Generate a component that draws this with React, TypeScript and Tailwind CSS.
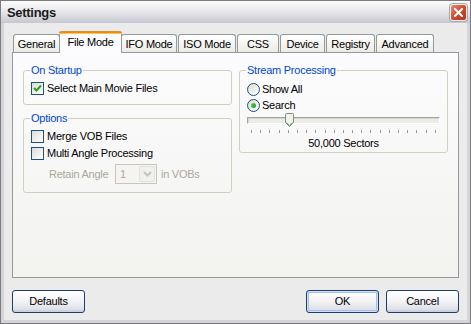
import React from "react";

function CheckBox({ checked }: { checked?: boolean }) {
  return (
    <span className="w-[13px] h-[13px] shrink-0 border border-[#1c5180] bg-gradient-to-br from-[#dcdcd7] to-[#ffffff] flex items-center justify-center">
      {checked && (
        <svg width="9" height="9" viewBox="0 0 9 9">
          <path d="M1 4 L3.5 6.5 L8 1.5" fill="none" stroke="#21a121" strokeWidth="2" />
        </svg>
      )}
    </span>
  );
}

function Radio({ checked }: { checked?: boolean }) {
  return (
    <span className="w-[13px] h-[13px] shrink-0 rounded-full border border-[#1c5180] bg-gradient-to-br from-[#dcdcd7] to-[#ffffff] flex items-center justify-center">
      {checked && <span className="w-[5px] h-[5px] rounded-full bg-gradient-to-br from-[#55d051] to-[#1a9e1a]" />}
    </span>
  );
}

function Button({ label, def }: { label: string; def?: boolean }) {
  return (
    <div
      className={
        "w-[73px] h-[23px] rounded-[3px] border border-[#1f3f6b] bg-gradient-to-b from-[#ffffff] via-[#f3f3f6] to-[#d8d9e2] flex items-center justify-center " +
        (def ? "shadow-[inset_0_0_0_1px_#cfe0fb,inset_0_0_0_2px_#a4bff0]" : "shadow-[inset_0_-2px_0_#d0d1da]")
      }
    >
      {label}
    </div>
  );
}

const tabs = [
  { label: "General", cls: "w-[47px]" },
  { label: "File Mode", cls: "w-[63px]", active: true },
  { label: "IFO Mode", cls: "w-[56px]" },
  { label: "ISO Mode", cls: "w-[58px]" },
  { label: "CSS", cls: "w-[42px]" },
  { label: "Device", cls: "w-[45px]" },
  { label: "Registry", cls: "w-[49px]" },
  { label: "Advanced", cls: "w-[58px]" },
];

export default function App() {
  const ticks = Array.from({ length: 21 }, (_, i) => i);
  return (
    <div className="w-[471px] h-[324px] flex flex-col border border-[#7c7c80] bg-[#d4d4d8] text-[11px] leading-[13px] tracking-[-0.25px] text-black font-[family-name:'Liberation_Sans',Tahoma,sans-serif] overflow-hidden select-none">
      {/* Title bar */}
      <div className="h-[22px] shrink-0 flex items-center justify-between pl-[6px] pr-[3px] bg-gradient-to-b from-[#fdfdfd] via-[#e6e6ea] to-[#c6c7d0]">
        <span className="font-bold text-[13px] tracking-[-0.3px] text-[#1a1a1a] pt-[1px]">Settings</span>
        <div className="w-[17px] h-[17px] rounded-[3px] border border-[#f0f0f0] bg-gradient-to-br from-[#e88a74] via-[#d2492f] to-[#b5311c] flex items-center justify-center shadow-[0_0_0_1px_#a8a8b0]">
          <svg width="9" height="9" viewBox="0 0 9 9">
            <path d="M1 1 L8 8 M8 1 L1 8" stroke="#ffffff" strokeWidth="2" strokeLinecap="square" />
          </svg>
        </div>
      </div>

      {/* Body */}
      <div className="flex-1 mx-[3px] mb-[3px] bg-[#ebebeb] flex flex-col px-[8px] pt-[8px] pb-[7px]">
        {/* Tabs */}
        <div className="h-[21px] flex items-end gap-[1px] pl-[1px] relative z-10">
          {tabs.map((t) =>
            t.active ? (
              <div
                key={t.label}
                className={t.cls + " -mx-[2px] h-[22px] -mb-px rounded-t-[3px] border-x border-[#919b9c] bg-[#fcfcfe] flex flex-col"}
              >
                <div className="h-[3px] rounded-t-[3px] bg-[#e68b2c] border-b border-[#ffc73c] -mx-px" />
                <div className="flex-1 flex items-start justify-center pt-[2px]">{t.label}</div>
              </div>
            ) : (
              <div
                key={t.label}
                className={t.cls + " h-[18px] rounded-t-[3px] border-x border-t border-[#919b9c] bg-gradient-to-b from-[#ffffff] to-[#ecebe5] flex items-center justify-center pt-[1px]"}
              >
                {t.label}
              </div>
            )
          )}
        </div>

        {/* Panel */}
        <div className="h-[226px] shrink-0 border border-[#919b9c] bg-gradient-to-b from-[#fcfcfe] to-[#f2f2ef] flex gap-[7px] px-[10px] pt-[11px]">
          {/* Left column */}
          <div className="w-[209px] flex flex-col gap-[7px]">
            <fieldset className="h-[41px] border border-[#d0d0bf] rounded-[3px] px-[7px] pt-[5px]">
              <legend className="ml-[-1px] px-[1px] text-[#0046d5]">On Startup</legend>
              <div className="flex items-center gap-[3px]">
                <CheckBox checked />
                <span>Select Main Movie Files</span>
              </div>
            </fieldset>
            <fieldset className="h-[81px] border border-[#d0d0bf] rounded-[3px] px-[7px] pt-[5px]">
              <legend className="ml-[-1px] px-[1px] text-[#0046d5]">Options</legend>
              <div className="flex flex-col gap-[4px]">
                <div className="flex items-center gap-[3px]">
                  <CheckBox />
                  <span>Merge VOB Files</span>
                </div>
                <div className="flex items-center gap-[3px]">
                  <CheckBox />
                  <span>Multi Angle Processing</span>
                </div>
                <div className="flex items-center pl-[18px] h-[20px] text-[#aca899]">
                  <span className="w-[66px]">Retain Angle</span>
                  <div className="w-[42px] h-[20px] border border-[#c9c7ba] bg-[#f5f4f0] flex items-center">
                    <span className="flex-1 pl-[4px]">1</span>
                    <div className="w-[16px] h-[16px] mr-[1px] rounded-[2px] bg-[#f0f0ec] border border-[#e2e1da] flex items-center justify-center">
                      <svg width="9" height="6" viewBox="0 0 9 6">
                        <path d="M1 1 L4.5 4.5 L8 1" fill="none" stroke="#c3c3c0" strokeWidth="2" />
                      </svg>
                    </div>
                  </div>
                  <span className="ml-[4px]">in VOBs</span>
                </div>
              </div>
            </fieldset>
          </div>

          {/* Right column */}
          <div className="w-[209px] flex flex-col">
            <fieldset className="h-[89px] border border-[#d0d0bf] rounded-[3px] px-[7px] pt-[6px]">
              <legend className="ml-[-1px] px-[1px] text-[#0046d5]">Stream Processing</legend>
              <div className="flex flex-col gap-[3px]">
                <div className="flex items-center gap-[2px]">
                  <Radio />
                  <span>Show All</span>
                </div>
                <div className="flex items-center gap-[2px]">
                  <Radio checked />
                  <span>Search</span>
                </div>
              </div>
              <div className="relative h-[15px] mt-[1px] flex items-center">
                <div className="w-full h-[7px] border border-t-[#a5a5a0] border-l-[#a5a5a0] border-b-[#ffffff] border-r-[#ffffff] bg-[#ecece6] shadow-[inset_1px_1px_0_#d6d6d0]" />
                <svg className="absolute left-[38px] top-[0px]" width="9" height="14" viewBox="0 0 9 14">
                  <path d="M0.5 1.5 Q0.5 0.5 1.5 0.5 L7.5 0.5 Q8.5 0.5 8.5 1.5 L8.5 9.5 L4.5 13.5 L0.5 9.5 Z" fill="#f2f2ec" stroke="#7e8b83" />
                  <path d="M1.5 9.5 L4.5 12.3 L7.5 9.5" fill="none" stroke="#61c45a" />
                </svg>
              </div>
              <div className="flex justify-between px-[4px] mt-[2px] h-[4px]">
                {ticks.map((i) => (
                  <span key={i} className="w-[1px] h-[3px] bg-[#9a9a98]" />
                ))}
              </div>
              <div className="text-center mt-[3px]">50,000 Sectors</div>
            </fieldset>
          </div>
        </div>

        {/* Buttons */}
        <div className="mt-[12px] flex justify-between">
          <Button label="Defaults" />
          <div className="flex gap-[7px]">
            <Button label="OK" def />
            <Button label="Cancel" />
          </div>
        </div>
      </div>
    </div>
  );
}
